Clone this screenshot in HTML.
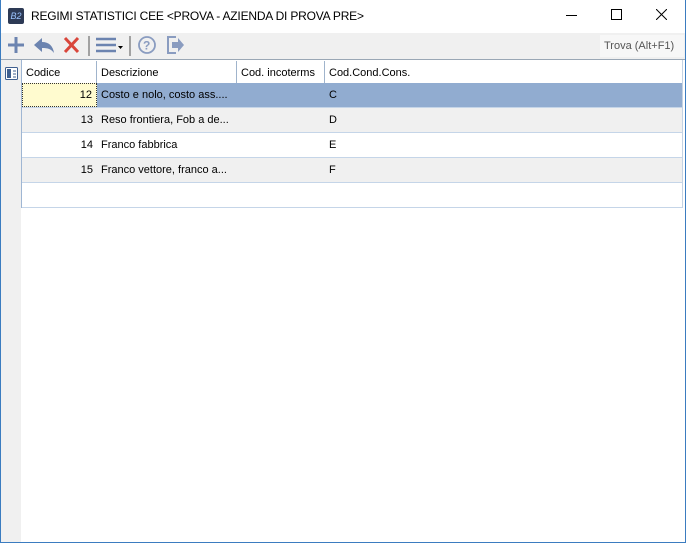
<!DOCTYPE html><html><head><style>
body{margin:0;width:686px;height:543px;overflow:hidden;font-family:"Liberation Sans",sans-serif;font-size:11px;color:#000;position:relative;background:#fff}
.abs{position:absolute}
.hdr div,.row div{position:absolute;top:0;height:100%;box-sizing:border-box;padding:6px 4px 0}
</style></head><body>
<div class="abs" style="left:0;top:0;width:686px;height:543px;box-sizing:border-box;border:1px solid #3b7cc0;border-top:none"></div>
<div class="abs" style="left:8px;top:8px;width:16px;height:16px;background:#2d3a55;border-radius:2px;color:#9cc4ff;font-size:9px;font-style:italic;text-align:center;line-height:16px">B2</div>
<div class="abs" style="left:31px;top:9px;font-size:12px;letter-spacing:-0.2px">REGIMI STATISTICI CEE &lt;PROVA - AZIENDA DI PROVA PRE&gt;</div>
<div class="abs" style="left:566px;top:15px;width:11px;height:1px;background:#000"></div>
<div class="abs" style="left:611px;top:9px;width:9px;height:9px;border:1px solid #000"></div>
<svg class="abs" style="left:656px;top:9px" width="11" height="11"><path d="M0 0L11 11M11 0L0 11" stroke="#000"/></svg>
<div class="abs" style="left:1px;top:33px;width:684px;height:26px;background:#f0f0f0;border-bottom:1px solid #9aa7b5"></div>
<svg class="abs" style="left:4px;top:35px" width="190" height="22">
<path d="M4 10h16M12 2v16" stroke="#6c84b0" stroke-width="3"/>
<path d="M30 10l8-7v4c7 0 11 4 12 11-3-4-6-5-12-5v4z" fill="#6c84b0"/>
<path d="M61 3l13 14M74 3L61 17" stroke="#d9463b" stroke-width="3"/>
<path d="M85 1v20" stroke="#555"/>
<path d="M92 4h20M92 10h20M92 16h20" stroke="#6c84b0" stroke-width="2.5"/>
<path d="M114 11h5l-2.5 3z" fill="#000"/>
<path d="M126 1v20" stroke="#555"/>
<circle cx="143" cy="10" r="8" fill="none" stroke="#8a9cc0" stroke-width="1.8"/>
<text x="139" y="14.5" font-size="12" font-weight="bold" fill="#8a9cc0" font-family="Liberation Sans">?</text>
<path d="M172 2h-8v16h8" fill="none" stroke="#8a9cc0" stroke-width="2"/><path d="M168 7h6v-4l6 7-6 7v-4h-6z" fill="#8a9cc0"/>
</svg>
<div class="abs" style="left:600px;top:35px;width:80px;height:22px;background:#f7f7f7;color:#555;line-height:22px;font-size:11px;padding-left:4px">Trova (Alt+F1)</div>
<div class="abs" style="left:1px;top:60px;width:20px;height:482px;background:#f0f0f0"></div>
<svg class="abs" style="left:5px;top:67px" width="13" height="13"><rect x="0.5" y="0.5" width="12" height="12" rx="1" fill="#fff" stroke="#3f5f8f"/><rect x="2" y="2" width="4" height="9" fill="#3f5f8f"/><path d="M8 4h3M8 7h3M8 10h3" stroke="#3f5f8f"/></svg>
<div class="abs" style="left:21px;top:60px;width:660px;height:148px;border-left:1px solid #9fb6d3;border-right:1px solid #c5d3e3"></div>
<div class="abs hdr" style="left:22px;top:61px;width:660px;height:22px;background:#fff;border-bottom:1px solid #a0b4cc">
<div style="left:0;width:75px;border-right:1px solid #a0b4cc">Codice</div>
<div style="left:75px;width:140px;border-right:1px solid #a0b4cc">Descrizione</div>
<div style="left:215px;width:88px;border-right:1px solid #a0b4cc">Cod. incoterms</div>
<div style="left:303px;width:357px">Cod.Cond.Cons.</div>
</div>
<div class="abs row" style="left:22px;top:83px;width:660px;height:24px;background:#91acd0;border-bottom:1px solid #c5d5e8">
<div style="left:0;width:75px;background:#fffbcf;border:1px dotted #333;text-align:right;padding-top:5px">12</div>
<div style="left:75px;width:140px">Costo e nolo, costo ass....</div>
<div style="left:303px">C</div></div>
<div class="abs row" style="left:22px;top:108px;width:660px;height:24px;background:#f0f0f0;border-bottom:1px solid #c5d5e8">
<div style="left:0;width:75px;text-align:right">13</div><div style="left:75px">Reso frontiera, Fob a de...</div><div style="left:303px">D</div></div>
<div class="abs row" style="left:22px;top:133px;width:660px;height:24px;background:#fff;border-bottom:1px solid #c5d5e8">
<div style="left:0;width:75px;text-align:right">14</div><div style="left:75px">Franco fabbrica</div><div style="left:303px">E</div></div>
<div class="abs row" style="left:22px;top:158px;width:660px;height:24px;background:#f0f0f0;border-bottom:1px solid #c5d5e8">
<div style="left:0;width:75px;text-align:right">15</div><div style="left:75px">Franco vettore, franco a...</div><div style="left:303px">F</div></div>
<div class="abs" style="left:22px;top:207px;width:660px;height:1px;background:#c5d5e8"></div>
</body></html>
